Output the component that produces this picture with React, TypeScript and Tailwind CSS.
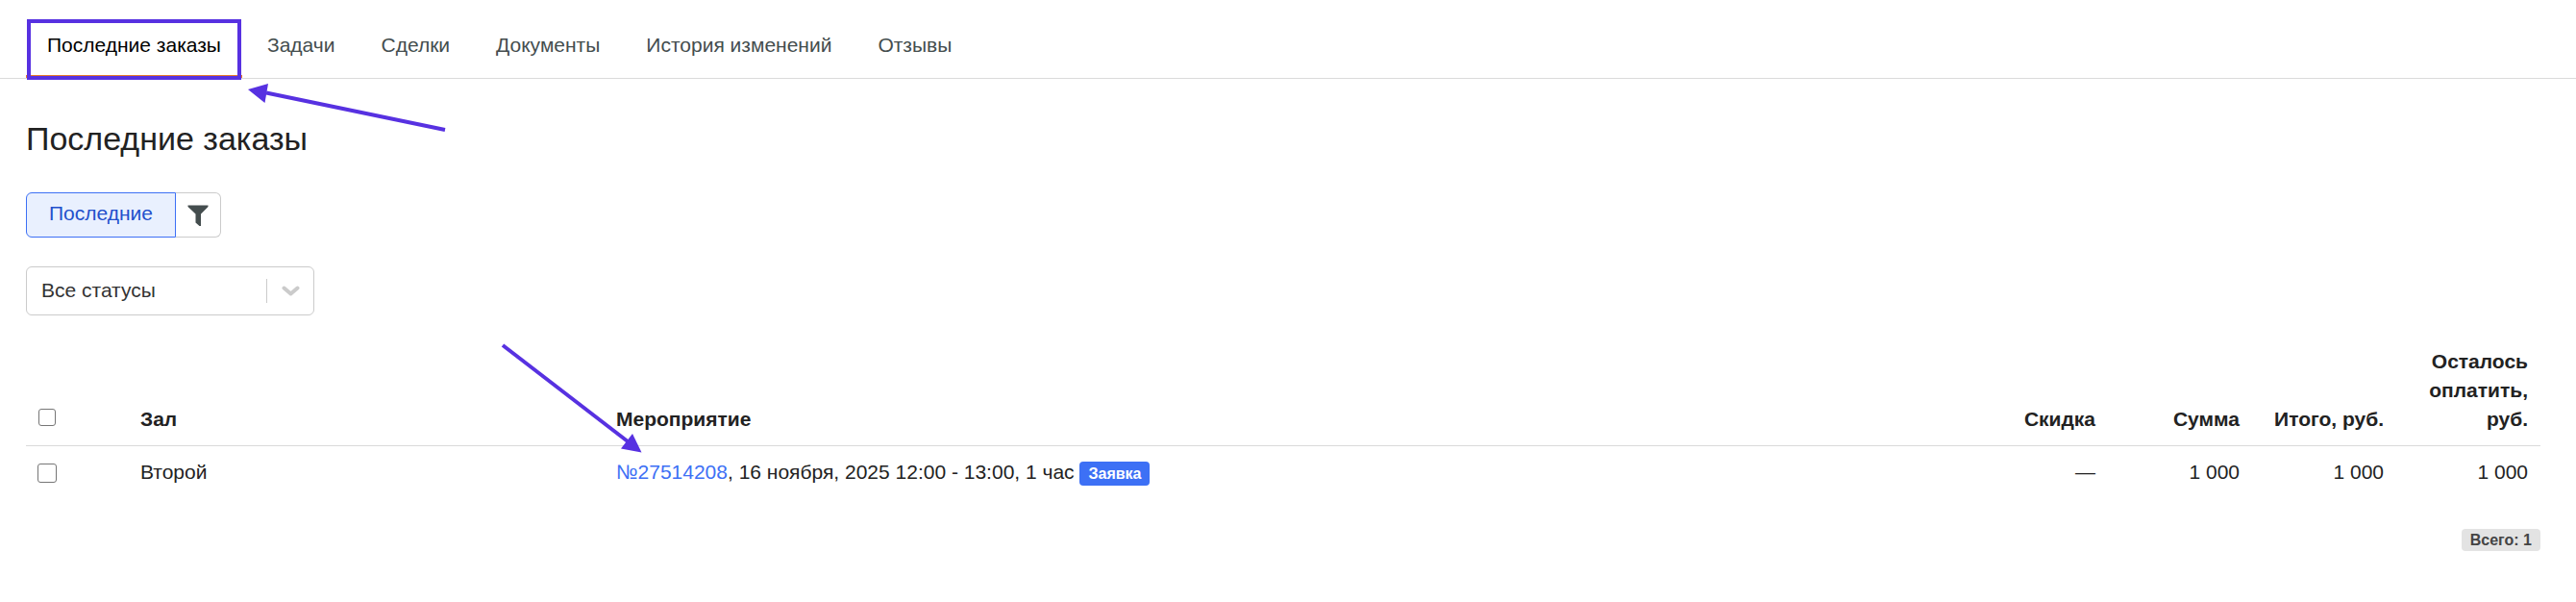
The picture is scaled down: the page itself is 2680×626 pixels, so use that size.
import React from 'react';

const tabs = ['Последние заказы', 'Задачи', 'Сделки', 'Документы', 'История изменений', 'Отзывы'];

const orders = [
  {
    id: '27514208',
    hall: 'Второй',
    details: '16 ноября, 2025 12:00 - 13:00, 1 час',
    status: 'Заявка',
    discount: '—',
    sum: '1\u00a0000',
    total: '1\u00a0000',
    left: '1\u00a0000',
  },
];

const Tabs = () => (
  <nav className="flex gap-1 border-b border-[#dadada] pl-[27px]">
    {tabs.map((tab, index) => (
      <a
        key={tab}
        href="#"
        className={`relative px-[22px] pt-8 pb-[19px] leading-[30px] ${index === 0 ? 'text-black' : 'text-[#444d4e]'}`}
      >
        {tab}
        {index === 0 && (
          <>
            <span className="absolute inset-x-0 bottom-0 h-[3px] bg-[#e8792b]" />
            <span className="absolute inset-x-px top-5 -bottom-[2px] border-4 border-[#5731e1]" />
            <svg className="absolute top-[84px] left-[228px] text-[#5731e1]" width="212" height="56" fill="none" aria-hidden="true">
              <path d="M22 12.5 208 51" stroke="currentColor" strokeWidth="4" />
              <path d="M3 9 24 3 20.500 23Z" fill="currentColor" />
            </svg>
          </>
        )}
      </a>
    ))}
  </nav>
);

const Filters = () => (
  <>
    <div className="flex h-[47px]">
      <button type="button" className="rounded-l-md border border-[#3d70f5] bg-[#e9f0fe] px-[23px] pb-1 text-[#2350cc]">
        Последние
      </button>
      <button
        type="button"
        aria-label="Фильтр"
        className="flex w-[47px] items-center justify-center rounded-r-md border border-l-0 border-[#cbcbcb] text-[#444d4e]"
      >
        <svg width="22" height="22" viewBox="0 0 22 22" fill="currentColor" aria-hidden="true">
          <path d="M.5.500h21v1.500L14 9.500V22h-1.500L8.500 18.500v-9L.5 2Z" />
        </svg>
      </button>
    </div>

    <div className="relative mt-[30px] w-[300px]">
      <select
        aria-label="Статус"
        className="h-[51px] w-full appearance-none rounded-md border border-[#cbcbcb] bg-white pr-14 pb-[2px] pl-[15px] text-[#333333]"
      >
        <option>Все статусы</option>
      </select>
      <div className="pointer-events-none absolute inset-y-0 right-0 flex items-center text-[#cbcbcb]">
        <span className="h-[25px] w-px bg-[#cbcbcb]" />
        <svg className="mx-[15px]" width="19" height="12" viewBox="0 0 19 12" fill="none" aria-hidden="true">
          <path d="M2.500 2.500 9.500 8.500 16.500 2.500" stroke="currentColor" strokeWidth="4" strokeLinecap="round" strokeLinejoin="round" />
        </svg>
      </div>
    </div>
  </>
);

const OrdersTable = () => (
  <table className="mt-[21px] w-full table-fixed text-left leading-[30px]">
    <colgroup>
      <col className="w-[106px]" />
      <col className="w-[495px]" />
      <col />
      <col className="w-[150px]" />
      <col className="w-[150px]" />
      <col className="w-[150px]" />
      <col className="w-[150px]" />
    </colgroup>
    <thead>
      <tr className="border-b border-[#dadada] align-bottom">
        <th className="px-[13px] pb-5">
          <input
            type="checkbox"
            aria-label="Выбрать все заказы"
            className="block size-[18px] appearance-none rounded-[3px] border border-[#767676] bg-white"
          />
        </th>
        <th className="px-[13px] py-3">Зал</th>
        <th className="relative px-[13px] py-3">
          Мероприятие
          <svg className="absolute -bottom-2 -left-[108px] text-[#5731e1]" width="150" height="116" fill="none" aria-hidden="true">
            <path d="M3 4 133 104" stroke="currentColor" strokeWidth="4" />
            <path d="M147.500 115.500 138 96 126 111.500Z" fill="currentColor" />
          </svg>
        </th>
        <th className="px-[13px] py-3 text-right">Скидка</th>
        <th className="px-[13px] py-3 text-right">Сумма</th>
        <th className="py-3 pr-[13px] text-right whitespace-nowrap">Итого, руб.</th>
        <th className="px-[13px] py-3 text-right">Осталось оплатить, руб.</th>
      </tr>
    </thead>
    <tbody>
      {orders.map((order) => (
        <tr key={order.id} className="align-top">
          <td className="px-3 pt-[18px]">
            <input
              type="checkbox"
              aria-label={`Выбрать заказ №${order.id}`}
              className="block size-5 appearance-none rounded-[3px] border border-[#767676] bg-white"
            />
          </td>
          <td className="px-[13px] py-3">{order.hall}</td>
          <td className="px-[13px] py-3">
            <a href="#" className="text-[#3d70f5]">№{order.id}</a>, {order.details}{' '}
            <span className="inline-block rounded-[4px] bg-[#3d70f5] px-[9px] text-base leading-[25px] font-bold text-white">
              {order.status}
            </span>
          </td>
          <td className="px-[13px] py-3 text-right">{order.discount}</td>
          <td className="px-[13px] py-3 text-right">{order.sum}</td>
          <td className="px-[13px] py-3 text-right">{order.total}</td>
          <td className="px-[13px] py-3 text-right">{order.left}</td>
        </tr>
      ))}
    </tbody>
  </table>
);

const App = () => {
  return (
    <div className="min-h-screen bg-white font-['Liberation_Sans',Arial,sans-serif] text-[21px] text-[#222222]">
      <Tabs />
      <main className="pr-[37px] pb-4 pl-[27px]">
        <h1 className="pt-[38px] pb-8 text-[34px] leading-[48px]">Последние заказы</h1>
        <Filters />
        <OrdersTable />
        <div className="mt-8 flex justify-end">
          <span className="rounded-[4px] bg-[#e3e3e3] px-[9px] text-base leading-[23px] font-bold text-[#444444]">
            Всего: {orders.length}
          </span>
        </div>
      </main>
    </div>
  );
};

export default App;
